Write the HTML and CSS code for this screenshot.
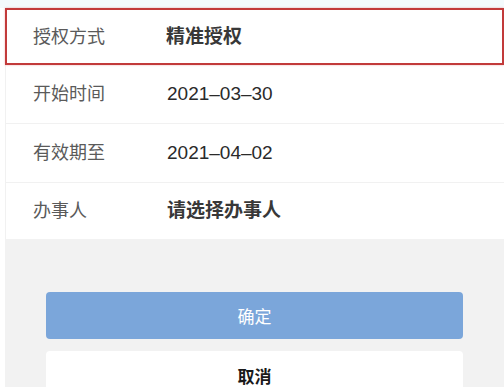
FILE: index.html
```html
<!DOCTYPE html>
<html lang="zh-CN">
<head>
<meta charset="utf-8">
<link rel="stylesheet" href="styles.css">
</head>
<body>
<div class="page">
  <div class="list">
    <div class="row row-active">
      <span class="label">授权方式</span>
      <span class="value strong">精准授权</span>
    </div>
    <div class="row">
      <span class="label">开始时间</span>
      <span class="value">2021–03–30</span>
    </div>
    <div class="row">
      <span class="label">有效期至</span>
      <span class="value">2021–04–02</span>
    </div>
    <div class="row row-last">
      <span class="label">办事人</span>
      <span class="value strong">请选择办事人</span>
    </div>
  </div>
  <div class="actions">
    <div class="btn btn-primary">确定</div>
    <div class="btn btn-cancel">取消</div>
  </div>
</div>
</body>
</html>
```

FILE: styles.css
```css
html, body {
  margin: 0;
  padding: 0;
  height: 100%;
  overflow: hidden;
}
body {
  background: #ffffff;
  font-family: "Liberation Sans", "Noto Sans CJK SC", sans-serif;
}
.page {
  padding-top: 8px;
  padding-left: 5px;
  background: linear-gradient(#f3fafc, #f3fafc) top / 100% 8px no-repeat, #ffffff;
  height: 100%;
  box-sizing: border-box;
  display: flex;
  flex-direction: column;
}
.list {
  background: #ffffff;
  border-left: 1px solid #f1f1f1;
}
.row {
  display: flex;
  align-items: center;
  height: 58px;
  border-bottom: 1px solid #f1f1f1;
  font-size: 18px;
  line-height: 24px;
}
.row-active {
  height: 53px;
  border: 2px solid #c23a3a;
  box-shadow: 0 0 2px rgba(220, 90, 90, 0.45);
  margin-left: -1px;
}
.row-last {
  height: 56px;
  border-bottom: none;
}
.label {
  width: 134px;
  padding-left: 27px;
  color: #5a5a5a;
  flex: none;
}
.row-active .label {
  padding-left: 26px;
}
.row-active .value {
  margin-left: -1px;
}
.value {
  color: #2a2a2a;
  font-size: 19px;
}
.strong {
  font-weight: bold;
  color: #383838;
}
.actions {
  flex: 1;
  background: #f2f2f2;
  padding: 53px 41px 0 41px;
  display: flex;
  flex-direction: column;
  gap: 12px;
}
.btn {
  height: 47px;
  border-radius: 4px;
  display: flex;
  align-items: center;
  justify-content: center;
  font-size: 17px;
}
.btn-primary {
  background: #7ba6da;
  color: #ffffff;
}
.btn-cancel {
  background: #ffffff;
  color: #1a1a1a;
  font-weight: bold;
  align-items: flex-start;
  padding-top: 12px;
  box-sizing: border-box;
}
```
